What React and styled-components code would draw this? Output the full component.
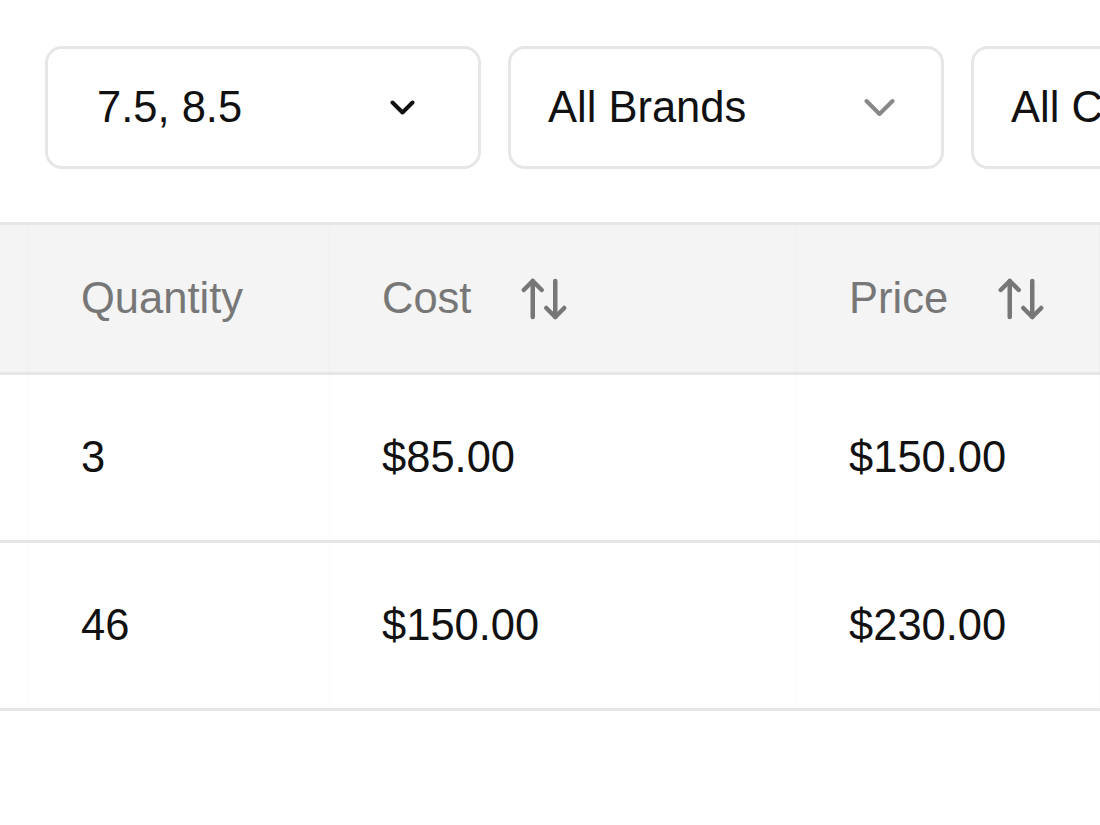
import React from "react";
import styled, { createGlobalStyle } from "styled-components";
import { ArrowUpDown } from "lucide-react";

const GlobalStyle = createGlobalStyle`
  html, body {
    margin: 0;
    padding: 0;
    background: #fff;
    overflow: hidden;
  }
  body {
    font-family: "Liberation Sans", Arial, sans-serif;
    color: #111;
  }
`;

const filters = [
  { label: "7.5, 8.5", pad: "0 63px 0 49px", dark: true },
  { label: "All Brands", pad: "0 46px 0 37px", dark: false },
  { label: "All Categories", pad: "0 46px 0 37px", dark: false },
];

const columns = [
  { key: "qty", label: "Quantity", sortable: false },
  { key: "cost", label: "Cost", sortable: true },
  { key: "price", label: "Price", sortable: true },
];

const rows = [
  { qty: "3", cost: "$85.00", price: "$150.00" },
  { qty: "46", cost: "$150.00", price: "$230.00" },
];

const Page = styled.div`
  width: 1100px;
  height: 825px;
  overflow: hidden;
  padding-top: 46px;
  box-sizing: border-box;
`;

const FilterBar = styled.div`
  display: flex;
  gap: 27px;
  padding-left: 45px;
  margin-bottom: 53px;
`;

const Select = styled.div`
  flex: 0 0 436px;
  height: 123px;
  box-sizing: border-box;
  border: 3px solid #e6e6e6;
  border-radius: 17px;
  display: flex;
  align-items: center;
  justify-content: space-between;
  padding: ${(p) => p.$pad};
  font-size: 43.5px;
  color: #111;
  white-space: nowrap;
  overflow: hidden;
`;

const Chevron = styled.svg`
  flex: none;
  color: ${(p) => (p.$dark ? "#111" : "#888")};
`;

const Table = styled.div`
  border-top: 3px solid #e6e6e6;
`;

const Row = styled.div`
  display: grid;
  grid-template-columns: 29px 301px 467px 1fr;
  height: ${(p) => (p.$head ? "147px" : "165px")};
  background: ${(p) => (p.$head ? "#f4f4f4" : "#fff")};
  border-bottom: 3px solid #e6e6e6;
`;

const Cell = styled.div`
  display: flex;
  align-items: center;
  gap: 46px;
  padding-left: 52px;
  font-size: 43.5px;
  color: ${(p) => (p.$head ? "#777" : "#111")};
  border-right: 1px solid ${(p) => (p.$head ? "#eeeeee" : "#fbfbfb")};
  white-space: nowrap;
  overflow: hidden;

  &:first-child {
    padding-left: 0;
  }
`;

function ChevronIcon({ dark }) {
  return dark ? (
    <Chevron $dark width="25" height="15" viewBox="0 0 25 15" fill="none">
      <polyline points="2.5,2.5 12.5,12.5 22.5,2.5" stroke="currentColor" strokeWidth="4" strokeLinecap="round" strokeLinejoin="round" />
    </Chevron>
  ) : (
    <Chevron width="31" height="19" viewBox="0 0 31 19" fill="none">
      <polyline points="2.5,3 15.5,16 28.5,3" stroke="currentColor" strokeWidth="4" strokeLinecap="round" strokeLinejoin="round" />
    </Chevron>
  );
}

export default function App() {
  return (
    <Page>
      <GlobalStyle />
      <FilterBar>
        {filters.map((f) => (
          <Select key={f.label} $pad={f.pad}>
            <span>{f.label}</span>
            <ChevronIcon dark={f.dark} />
          </Select>
        ))}
      </FilterBar>

      <Table>
        <Row $head>
          <Cell $head />
          {columns.map((c) => (
            <Cell $head key={c.key}>
              <span>{c.label}</span>
              {c.sortable && <ArrowUpDown size={54} strokeWidth={2} color="#777" />}
            </Cell>
          ))}
        </Row>
        {rows.map((r, i) => (
          <Row key={i}>
            <Cell />
            <Cell>{r.qty}</Cell>
            <Cell>{r.cost}</Cell>
            <Cell>{r.price}</Cell>
          </Row>
        ))}
      </Table>
    </Page>
  );
}
